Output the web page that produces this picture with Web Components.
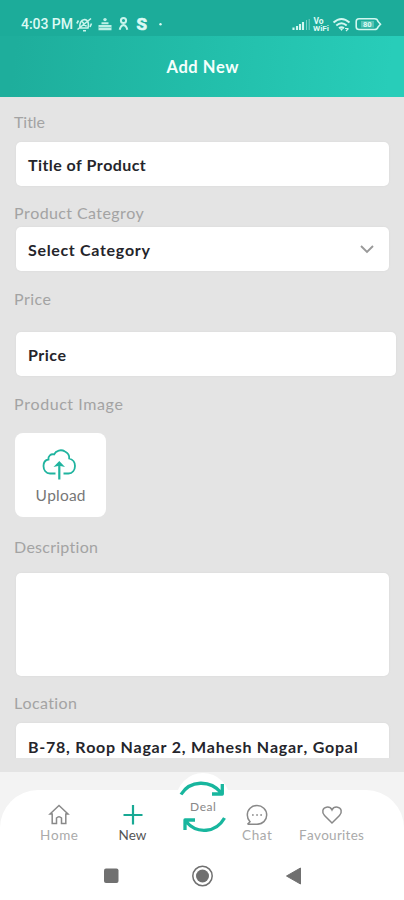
<!DOCTYPE html>
<html lang="en"><head><meta charset="utf-8"><title>Add New</title>
<style>
html,body{margin:0;height:900px;overflow:hidden}
body{font-family:Lato,"Open Sans",sans-serif;background:#e4e4e4}
</style></head><body>
<app-screen>
  <status-bar slot="top"></status-bar>
  <title-bar slot="top"><fit-text w="72">Add New</fit-text></title-bar>
  <form-label style="margin-top:15px"><fit-text w="31">Title</fit-text></form-label>
  <form-field style="margin-top:10px"><fit-text w="118">Title of Product</fit-text></form-field>
  <form-label style="margin-top:17px"><fit-text w="130">Product Categroy</fit-text></form-label>
  <form-field style="margin-top:4px" select><fit-text w="122">Select Category</fit-text></form-field>
  <form-label style="margin-top:18px"><fit-text w="37">Price</fit-text></form-label>
  <form-field style="margin-top:23px;margin-right:8px"><fit-text w="38">Price</fit-text></form-field>
  <form-label style="margin-top:18px"><fit-text w="109">Product Image</fit-text></form-label>
  <upload-tile><fit-text w="50">Upload</fit-text></upload-tile>
  <form-label style="margin-top:20px"><fit-text w="84">Description</fit-text></form-label>
  <form-field style="margin-top:16px;height:103px"></form-field>
  <form-label style="margin-top:17px"><fit-text w="63">Location</fit-text></form-label>
  <form-field style="margin-top:10px;height:46px"><fit-text w="330">B-78, Roop Nagar 2, Mahesh Nagar, Gopal</fit-text></form-field>
  <tab-bar slot="bottom"></tab-bar>
  <system-nav slot="bottom"></system-nav>
</app-screen>
<script>
const define=(name,html,ready)=>customElements.define(name,class extends HTMLElement{
  constructor(){super();this.attachShadow({mode:'open'}).innerHTML=html}
  connectedCallback(){if(ready)ready(this)}
});
define('app-screen',`<style>
:host{display:flex;flex-direction:column;height:900px;width:404px;overflow:hidden}
header{height:97px;background:linear-gradient(97deg,#1eae9c 5%,#22bda9 48%,#28cdb9 96%);flex:none}
main{height:661px;overflow:hidden;display:flex;flex-direction:column;flex:none}
footer{margin-top:14px;height:128px;background:#f3f3f3;flex:none}
</style><header><slot name="top"></slot></header><main><slot></slot></main><footer><slot name="bottom"></slot></footer>`);
define('status-bar',`<style>
:host{display:flex;height:36px;background:#1cac9a;color:#dcfaf4;align-items:flex-start;box-sizing:border-box;padding:16px 21px 0 21px;font-family:Roboto,sans-serif}
.time{font-size:14px;line-height:17px;font-weight:500;width:55px}
svg{flex:none;display:block} text{font-family:Roboto,sans-serif;font-weight:700;fill:#dcfaf4}
.r{margin-left:auto}
</style><fit-text class="time" w="52">4:03 PM</fit-text>
<svg width="90" height="18" fill="none" stroke="#c9f4ec">
<path d="M4 12C3.500 8 4.500 4 8.500 3.500C12.500 4 13 8 12 12ZM1.500 13.500L15 2.500M2.500 4.500L0.800 7.500M15.500 7.500L14 11M7 14.800H10M6 5.500L10.500 10.500" stroke-width="1.600"/>
<g stroke="none" fill="#bdf0e7"><path d="M22.500 9H35.500V14.200H22.500ZM25.500 8.200V6.200H32.500V8.200"/><circle cx="29" cy="3.600" r="1.700"/></g><path d="M22.500 11.500H35.500" stroke="#4cc2b2" stroke-width=".7"/>
<circle cx="47.500" cy="4.500" r="2.600" stroke-width="2"/><path d="M43.700 13.800Q44.500 9.500 47.500 9Q50.500 9.500 51.300 13.800" stroke-width="2"/>
<text x="60.500" y="13.800" font-size="16" stroke="#dcfaf4" stroke-width=".7" textLength="10.500" lengthAdjust="spacingAndGlyphs">S</text><circle cx="84.500" cy="8.300" r="1.200" fill="#dcfaf4" stroke="none"/></svg>
<svg class="r" width="92" height="18" viewBox="291 16 92 18" fill="none" stroke="#d2f7f0">
<path d="M293.500 30V27.500M297 30V26M300 30V24M303 30V22" stroke-width="2.100"/><path d="M306.500 30V20M309.200 30V19" opacity=".5"/>
<text x="313.500" y="23.500" font-size="8.500" stroke="none">Vo</text><text x="313" y="31" font-size="8" stroke="none" textLength="16" lengthAdjust="spacingAndGlyphs">WiFi</text>
<path d="M333.500 22.500Q341.500 15.500 349.500 22.500M336.300 25.500Q341.500 21 346.700 25.500M339 28.300Q341.500 26.300 344 28.300" stroke-width="2"/><path d="M341.500 31L339.800 28.500H343.200Z" fill="#d2f7f0" stroke="none"/><path d="M345 28.500H348.500M346 31L348.500 28.500" stroke-width="1.200"/>
<path d="M359 18.800H374.500Q377.500 18.800 378 21.500L380.500 24.200L378 27Q377.500 29.500 374.500 29.500H359Q356.200 29.500 356.200 26.700V21.600Q356.200 18.800 359 18.800Z" stroke-width="1.600"/><rect x="361" y="21" width="13" height="6.500" fill="#8fdcd0" opacity=".5" stroke="none"/>
<text x="363" y="27" font-size="7.500" stroke="none">80</text></svg>`);
define('title-bar',`<style>:host{display:flex;height:61px;align-items:center;justify-content:center;color:#f4fffc;font-size:16.500px;font-weight:700;padding:1px 0 0 1px;box-sizing:border-box}</style><slot></slot>`);
define('form-label',`<style>:host{display:block;height:20px;flex:none;margin-left:14px;font-size:16px;line-height:20px;color:#a3a3a3}</style><slot></slot>`);
define('form-field',`<style>
:host{display:flex;box-sizing:border-box;height:44px;flex:none;margin-left:16px;margin-right:15px;padding:1px 14px 0 12px;background:#fff;border-radius:5px;box-shadow:0 0 2px #d6d6d6;align-items:center;font-size:16px;line-height:20px;font-weight:700;color:#25252b}
svg{display:none;margin-left:auto}:host([select]) svg{display:block}
</style><slot></slot><svg width="16" height="12" fill="none" stroke="#999" stroke-width="1.900"><path d="M2 2L8 8L14 2"/></svg>`);
define('upload-tile',`<style>:host{display:flex;flex:none;flex-direction:column;align-items:center;width:91px;height:84px;margin:19px 0 0 15px;background:#fff;border-radius:8px;color:#777;font-size:15.500px;line-height:20px}svg{margin:15px 4px 1px 0;display:block}</style>
<svg width="36" height="36" fill="none" stroke="#20b49f" stroke-width="1.800"><path d="M14.500 25.500H9C5 25.500 2.500 22 2.500 18C2.500 14.500 4.500 12 7.500 11.500C6.800 8 10 5.500 13 6.500C15 2.500 20 1 24 3.500C27 5 28.500 7.500 28.200 10.500C32 11.500 34 14.500 34 18C34 22 31.500 25.500 27.500 25.500H22.500"/><path d="M18.300 31.500V15" stroke-width="2.200"/><path d="M12.500 19L18.300 13L24 19L18.300 17.800Z" fill="#20b49f" stroke="none"/></svg><slot></slot>`);
define('tab-item',`<style>:host{display:flex;flex-direction:column;align-items:center;color:#aaa;font-size:13.500px;line-height:18px}:host([active]){color:#555}</style><slot></slot>`);
define('tab-bar',`<style>
:host{display:block;position:relative;height:128px}
nav{position:absolute;inset:18px 0 0;background:#fff;border-radius:38px 38px 0 0;display:grid;grid-template-columns:40px 38px 40px 29px 95px 30px 27px 65px;padding-top:13px;align-items:start}
.bump{position:absolute;left:176px;top:1px;width:54px;height:64px;border-radius:27px;background:#fff}
svg{display:block;fill:none;stroke:#898989;stroke-width:1.500;margin-bottom:1px}
.deal{position:absolute;left:176px;top:0;width:54px;height:66px;color:#888;font-size:12px;line-height:14px}
.deal svg{position:absolute;left:0;top:0;stroke:#18b69e;stroke-width:3.300}
.deal fit-text{position:absolute;left:14px;top:28px}
</style><div class="bump"></div><nav><i></i>
<tab-item><svg width="24" height="22"><path d="M3 11L12 2.500L21 11H18.800V20.500H14.500V15Q12 12.500 9.500 15V20.500H5.200V11Z"/></svg><fit-text w="38">Home</fit-text></tab-item><i></i>
<tab-item active><svg width="24" height="22"><path d="M12 2V21.500M2.500 12H21.500" style="stroke:#18a994;stroke-width:2.200"/></svg><fit-text w="28">New</fit-text></tab-item><i></i>
<tab-item><svg width="24" height="22"><path d="M2.500 21.300H12C17.500 21.300 21.700 17.300 21.700 12C21.700 6.500 17.300 2.500 12 2.500C6.500 2.500 2.300 6.500 2.300 12C2.300 14.800 3.400 17.100 5 18.700L2.500 21.300"/><path d="M7 12H8.700M11.200 12H12.900M15.300 12H17"/></svg><fit-text w="30">Chat</fit-text></tab-item><i></i>
<tab-item><svg width="24" height="22"><path d="M12 20L4.500 12.500C1.500 9.500 2.500 4.800 6.500 4.200C9 3.800 11 5 12 7C13 5 15 3.800 17.500 4.200C21.500 4.800 22.500 9.500 19.500 12.500Z"/></svg><fit-text w="65">Favourites</fit-text></tab-item></nav>
<div class="deal"><svg width="54" height="66" stroke-linejoin="round"><path d="M5 22.500C14 8 34 7.500 45.500 21M46.300 12V22H36" /><path d="M48.500 46C40 61 21 62.500 10 49.500M9 58V48H19"/></svg><fit-text w="26">Deal</fit-text></div>`);
define('system-nav',`<style>:host{display:flex;position:relative;height:28px;margin-top:-38px;padding-left:103px;align-items:center}svg{display:block}</style>
<svg width="200" height="24" fill="#707070"><rect x="1" y="4.500" width="14.500" height="14.500" rx="2"/><circle cx="99.500" cy="12" r="6.500"/><circle cx="99.500" cy="12" r="9.700" fill="none" stroke="#707070" stroke-width="1.500"/><path d="M183.500 12L197.500 4V20Z" stroke="#707070" stroke-width="1" stroke-linejoin="round"/></svg>`);
// Defined last, so that the surrounding elements' font styles apply when the text is measured.
define('fit-text',`<style>:host{display:block;white-space:nowrap}span{display:inline-block;font-kerning:none;font-variant-ligatures:none}</style><span><slot></slot></span>`,el=>{
  const s=el.shadowRoot.querySelector('span'),n=el.textContent.length,w=+el.getAttribute('w');
  s.style.letterSpacing='0.01px';
  const gap=(w-s.getBoundingClientRect().width)/(n-1);
  s.style.letterSpacing=gap+'px';s.style.marginRight=-gap+'px';
});
</script></body></html>
